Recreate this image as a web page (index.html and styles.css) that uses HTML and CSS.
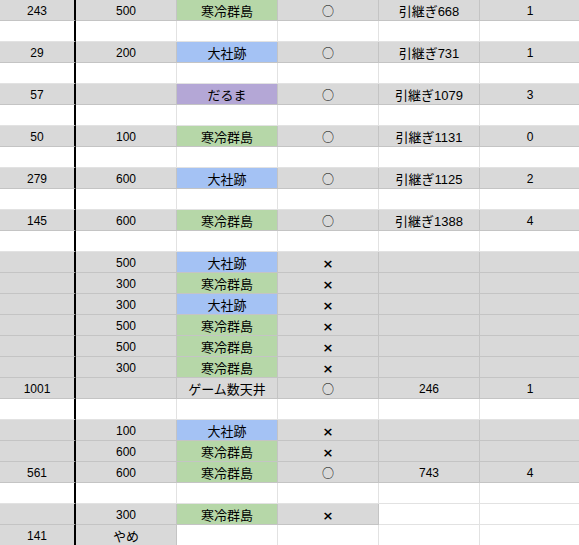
FILE: index.html
```html
<!DOCTYPE html>
<html lang="ja">
<head>
<meta charset="utf-8">
<link rel="stylesheet" href="styles.css">
</head>
<body>
<div class="sheet">
  <div class="row"><div class="c g">243</div><div class="c g">500</div><div class="c green ja">寒冷群島</div><div class="c g mark">○</div><div class="c g ja">引継ぎ668</div><div class="c g">1</div></div>
  <div class="row"><div class="c"></div><div class="c"></div><div class="c"></div><div class="c"></div><div class="c"></div><div class="c"></div></div>
  <div class="row"><div class="c g">29</div><div class="c g">200</div><div class="c blue ja">大社跡</div><div class="c g mark">○</div><div class="c g ja">引継ぎ731</div><div class="c g">1</div></div>
  <div class="row"><div class="c"></div><div class="c"></div><div class="c"></div><div class="c"></div><div class="c"></div><div class="c"></div></div>
  <div class="row"><div class="c g">57</div><div class="c g"></div><div class="c purple ja">だるま</div><div class="c g mark">○</div><div class="c g ja">引継ぎ1079</div><div class="c g">3</div></div>
  <div class="row"><div class="c"></div><div class="c"></div><div class="c"></div><div class="c"></div><div class="c"></div><div class="c"></div></div>
  <div class="row"><div class="c g">50</div><div class="c g">100</div><div class="c green ja">寒冷群島</div><div class="c g mark">○</div><div class="c g ja">引継ぎ1131</div><div class="c g">0</div></div>
  <div class="row"><div class="c"></div><div class="c"></div><div class="c"></div><div class="c"></div><div class="c"></div><div class="c"></div></div>
  <div class="row"><div class="c g">279</div><div class="c g">600</div><div class="c blue ja">大社跡</div><div class="c g mark">○</div><div class="c g ja">引継ぎ1125</div><div class="c g">2</div></div>
  <div class="row"><div class="c"></div><div class="c"></div><div class="c"></div><div class="c"></div><div class="c"></div><div class="c"></div></div>
  <div class="row"><div class="c g">145</div><div class="c g">600</div><div class="c green ja">寒冷群島</div><div class="c g mark">○</div><div class="c g ja">引継ぎ1388</div><div class="c g">4</div></div>
  <div class="row"><div class="c"></div><div class="c"></div><div class="c"></div><div class="c"></div><div class="c"></div><div class="c"></div></div>
  <div class="row"><div class="c g"></div><div class="c g">500</div><div class="c blue ja">大社跡</div><div class="c g x">×</div><div class="c g"></div><div class="c g"></div></div>
  <div class="row"><div class="c g"></div><div class="c g">300</div><div class="c green ja">寒冷群島</div><div class="c g x">×</div><div class="c g"></div><div class="c g"></div></div>
  <div class="row"><div class="c g"></div><div class="c g">300</div><div class="c blue ja">大社跡</div><div class="c g x">×</div><div class="c g"></div><div class="c g"></div></div>
  <div class="row"><div class="c g"></div><div class="c g">500</div><div class="c green ja">寒冷群島</div><div class="c g x">×</div><div class="c g"></div><div class="c g"></div></div>
  <div class="row"><div class="c g"></div><div class="c g">500</div><div class="c green ja">寒冷群島</div><div class="c g x">×</div><div class="c g"></div><div class="c g"></div></div>
  <div class="row"><div class="c g"></div><div class="c g">300</div><div class="c green ja">寒冷群島</div><div class="c g x">×</div><div class="c g"></div><div class="c g"></div></div>
  <div class="row"><div class="c g">1001</div><div class="c g"></div><div class="c g ja">ゲーム数天井</div><div class="c g mark">○</div><div class="c g">246</div><div class="c g">1</div></div>
  <div class="row"><div class="c"></div><div class="c"></div><div class="c"></div><div class="c"></div><div class="c"></div><div class="c"></div></div>
  <div class="row"><div class="c g"></div><div class="c g">100</div><div class="c blue ja">大社跡</div><div class="c g x">×</div><div class="c g"></div><div class="c g"></div></div>
  <div class="row"><div class="c g"></div><div class="c g">600</div><div class="c green ja">寒冷群島</div><div class="c g x">×</div><div class="c g"></div><div class="c g"></div></div>
  <div class="row"><div class="c g">561</div><div class="c g">600</div><div class="c green ja">寒冷群島</div><div class="c g mark">○</div><div class="c g">743</div><div class="c g">4</div></div>
  <div class="row"><div class="c"></div><div class="c"></div><div class="c"></div><div class="c"></div><div class="c"></div><div class="c"></div></div>
  <div class="row"><div class="c g"></div><div class="c g">300</div><div class="c green ja">寒冷群島</div><div class="c g x">×</div><div class="c"></div><div class="c"></div></div>
  <div class="row"><div class="c g">141</div><div class="c g ja">やめ</div><div class="c"></div><div class="c"></div><div class="c"></div><div class="c"></div></div>
</div>
</body>
</html>
```
FILE: styles.css
```css
html, body {
  margin: 0;
  padding: 0;
  background: #ffffff;
  overflow: hidden;
}

.sheet {
  width: 600px;
  font-family: "Liberation Sans", "Noto Sans CJK JP", sans-serif;
  font-size: 12px;
  color: #000;
}

.row {
  display: grid;
  grid-template-columns: 76px repeat(5, 101px);
  height: 21px;
}

.c {
  box-sizing: border-box;
  height: 21px;
  line-height: 21px;
  text-align: center;
  background: #ffffff;
  border-right: 1px solid #e2e2e2;
  border-bottom: 1px solid #e2e2e2;
  white-space: nowrap;
  overflow: hidden;
  padding-top: 1px;
}

.c:first-child {
  border-right: 2px solid #000000;
}

.g {
  background: #d9d9d9;
  border-right-color: #c4c4c4;
  border-bottom-color: #c4c4c4;
}

.green {
  background: #b6d7a8;
  border-right-color: #c4c4c4;
  border-bottom-color: #c4c4c4;
}

.blue {
  background: #a4c2f4;
  border-right-color: #c4c4c4;
  border-bottom-color: #c4c4c4;
}

.purple {
  background: #b4a7d6;
  border-right-color: #c4c4c4;
  border-bottom-color: #c4c4c4;
}

.ja {
  font-size: 13px;
}

.mark {
  font-family: "Noto Sans CJK JP", sans-serif;
  font-size: 12px;
  padding-top: 0;
}

.x {
  font-family: "DejaVu Sans", sans-serif;
  font-weight: bold;
  font-size: 13px;
}
```
